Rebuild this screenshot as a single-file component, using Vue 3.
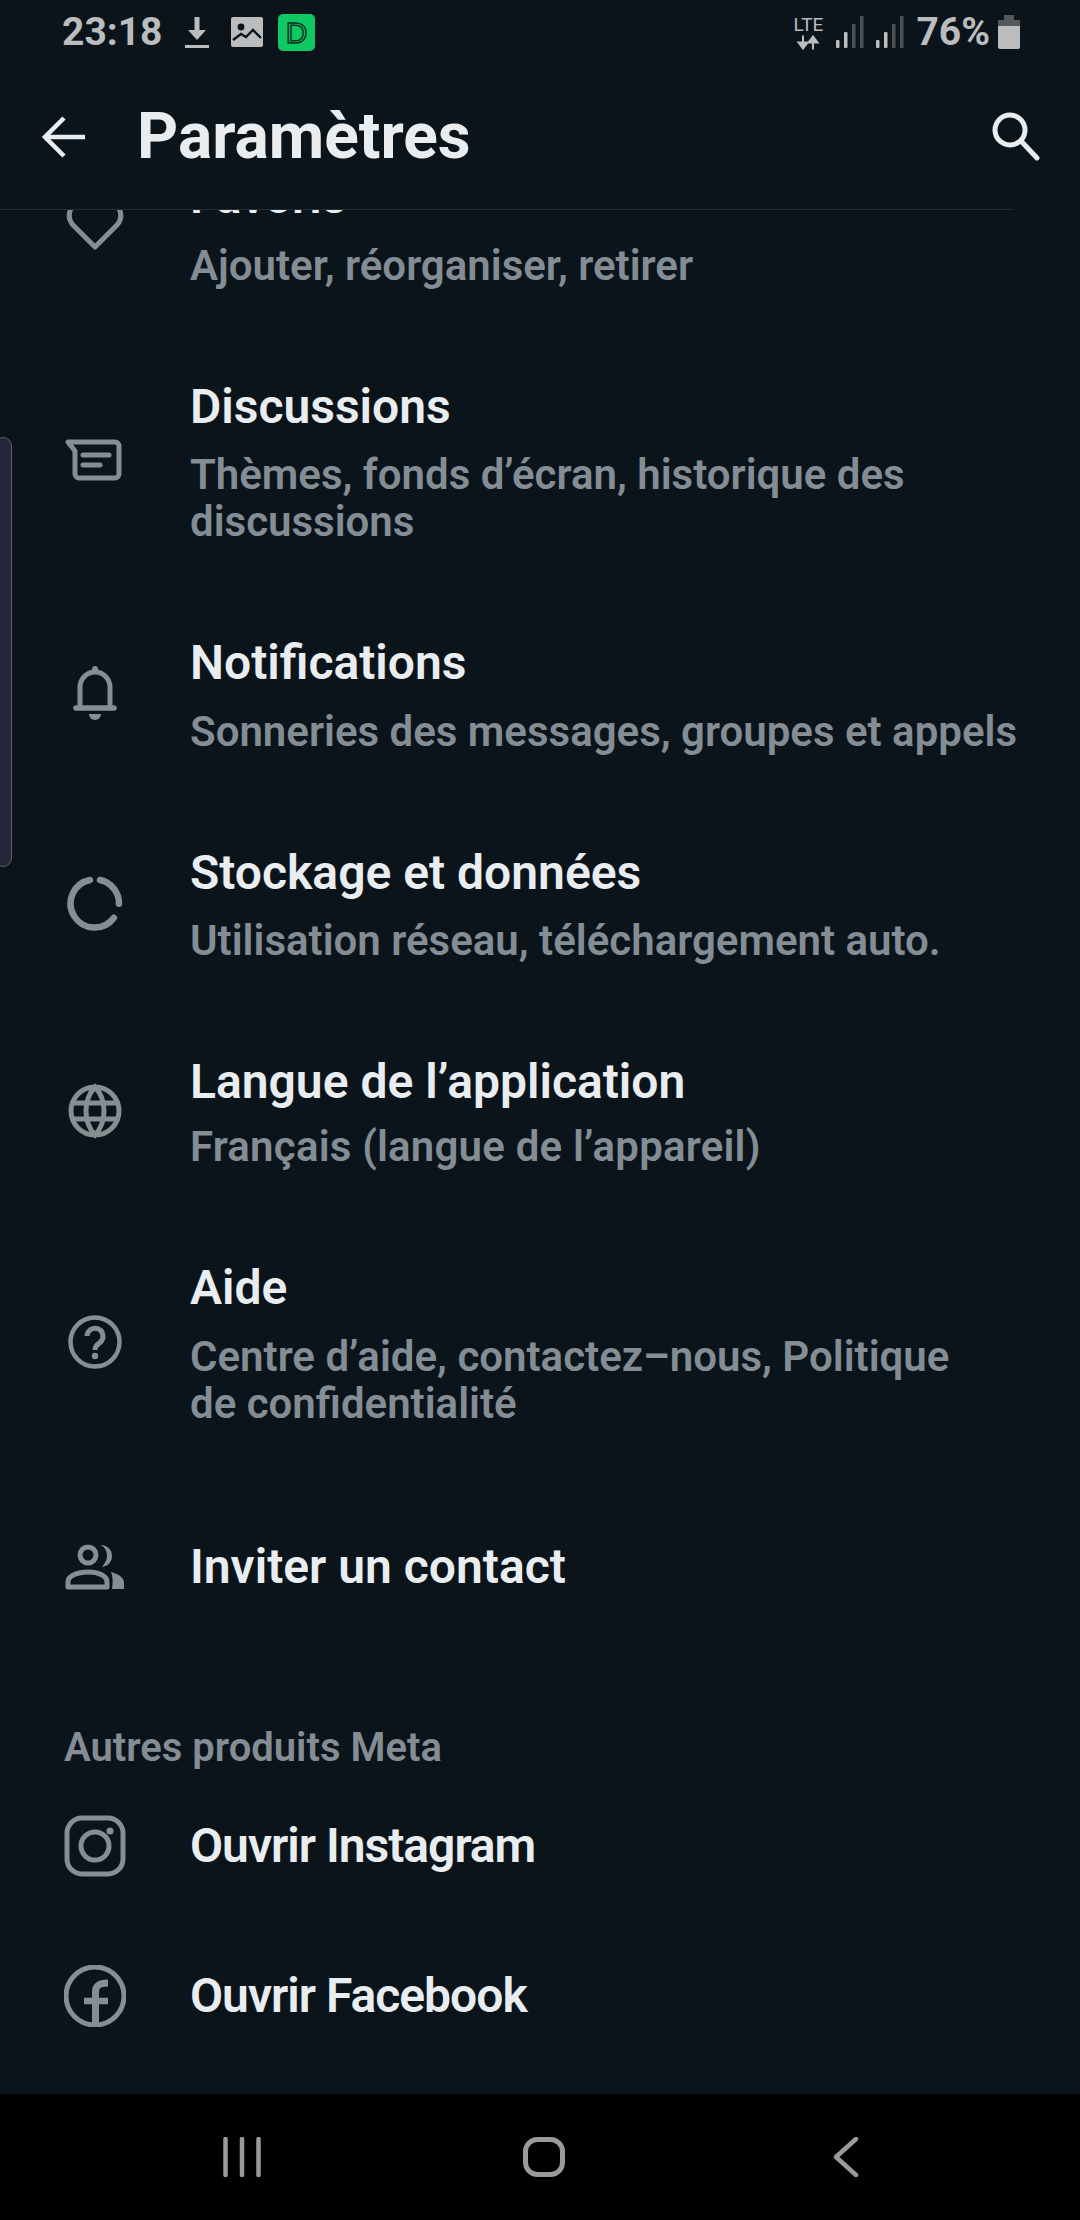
<template>
  <div class="phone">
    <div class="statusbar">
      <span class="time">23:18</span>
      <svg class="ic-download" viewBox="0 0 26 32" width="26" height="32">
        <path d="M13 1V16" stroke="#babcbe" stroke-width="5" fill="none" />
        <path d="M4 14H22L13 24Z" fill="#babcbe" />
        <path d="M1 30.5H25" stroke="#babcbe" stroke-width="3" fill="none" />
      </svg>
      <svg class="ic-image" viewBox="0 0 32 30" width="32" height="30">
        <rect x="0" y="0" width="32" height="30" rx="2" fill="#babcbe" />
        <circle cx="10" cy="10" r="3.4" fill="#0b141b" />
        <path d="M2 23L10 17L15 20L22 13L30 21" stroke="#0b141b" stroke-width="2.4" fill="none" />
      </svg>
      <div class="app-badge">
        <svg viewBox="0 0 37 37" width="37" height="37">
          <text x="18.5" y="29" text-anchor="middle" class="badge-letter">D</text>
        </svg>
      </div>
      <div class="status-right">
        <div class="lte">
          <span>LTE</span>
          <svg viewBox="0 0 24 14" width="24" height="15">
            <path d="M7 0V9M2.5 7L7 13L11.5 7Z" stroke="#babcbe" stroke-width="2" fill="#babcbe" />
            <path d="M17 14V5M12.5 7L17 1L21.5 7Z" stroke="#babcbe" stroke-width="2" fill="#babcbe" />
          </svg>
        </div>
        <svg v-for="n in 2" :key="n" class="signal" viewBox="0 0 28 32" width="28" height="32">
          <rect x="0" y="24" width="3.5" height="8" rx="1" fill="#babcbe" />
          <rect x="8" y="16" width="3.5" height="16" rx="1" fill="#babcbe" />
          <rect x="16" y="8" width="3.5" height="24" rx="1" fill="#4d5154" />
          <rect x="24" y="0" width="3.5" height="32" rx="1" fill="#4d5154" />
        </svg>
        <span class="battery-text">76%</span>
        <svg class="battery" viewBox="0 0 22 34" width="22" height="34">
          <path d="M6 0H16V5H22V11H0V5H6Z" fill="#55595c" />
          <path d="M0 11H22V32a2 2 0 0 1-2 2H2a2 2 0 0 1-2-2Z" fill="#babcbe" />
        </svg>
      </div>
    </div>

    <div class="appbar">
      <svg class="back" viewBox="0 0 44 46" width="44" height="46">
        <path d="M43 23H4M22 4L3 23L22 42" stroke="#e9edef" stroke-width="4.5" fill="none" />
      </svg>
      <h1 class="appbar-title">Paramètres</h1>
      <svg class="search" viewBox="0 0 48 50" width="48" height="50">
        <circle cx="18" cy="18" r="15" stroke="#e9edef" stroke-width="5" fill="none" />
        <path d="M29 29L45 46" stroke="#e9edef" stroke-width="5" stroke-linecap="round" />
      </svg>
    </div>
    <div class="appbar-line"></div>

    <div class="list">
      <div class="list-inner">
        <div v-for="row in rows" :key="row.title" class="row" :class="row.cls">
          <svg class="row-icon" viewBox="0 0 62 62" width="62" height="62">
            <g v-if="row.icon === 'heart'" fill="none" stroke="#868e92" stroke-width="5" stroke-linejoin="round">
              <path d="M31 50L9 28C1 19 7 4 19 4C24 4 28 6 31 10C34 6 38 4 43 4C55 4 61 19 53 28Z" />
            </g>
            <g v-else-if="row.icon === 'chat'" fill="none" stroke="#868e92" stroke-width="5" stroke-linejoin="round" stroke-linecap="round">
              <path d="M4 12H51a4 4 0 0 1 4 4V44a4 4 0 0 1-4 4H15a4 4 0 0 1-4-4V21Z" />
              <path d="M19 25H45M19 35H36" />
            </g>
            <g v-else-if="row.icon === 'bell'" fill="none" stroke="#868e92" stroke-width="5" stroke-linecap="round">
              <path d="M16 44V24a15 15 0 0 1 30 0V44" />
              <path d="M12 45H50" stroke-width="5.5" />
              <path d="M31 6V8" stroke-width="6" />
              <path d="M25 51H37a6 6 0 0 1-12 0Z" fill="#868e92" stroke="none" />
            </g>
            <g v-else-if="row.icon === 'storage'" fill="none" stroke="#868e92" stroke-width="6.5" stroke-linecap="round">
              <path d="M36 8A24 24 0 0 1 55 31.8" />
              <path d="M49.9 45.8A24 24 0 1 1 26 8" />
            </g>
            <g v-else-if="row.icon === 'globe'" fill="none" stroke="#868e92" stroke-width="5">
              <circle cx="31" cy="31" r="24" />
              <path d="M31 7C19 20 19 42 31 55C43 42 43 20 31 7Z" />
              <path d="M9 23H53M9 39H53" />
            </g>
            <g v-else-if="row.icon === 'help'" fill="none" stroke="#868e92" stroke-width="4.5">
              <circle cx="31" cy="31" r="24.5" />
              <path d="M23 25a8 8 0 1 1 13 6.5c-3 2.3-5 3.5-5 7.5" stroke-width="5" />
              <circle cx="31" cy="45" r="3.2" fill="#868e92" stroke="none" />
            </g>
            <g v-else-if="row.icon === 'people'">
              <circle cx="24" cy="19" r="8" fill="none" stroke="#868e92" stroke-width="5" />
              <path d="M4 51V46C4 40 13 36 24 36C35 36 43 40 43 46V51Z" fill="none" stroke="#868e92" stroke-width="5" stroke-linejoin="round" />
              <path d="M36 9C45 9 48 15 48 20C48 26 44 30 38 31C41 27 43 24 43 20C43 15 41 11 36 9Z" fill="#868e92" />
              <path d="M47 36C54 38 60 41 60 47V53H48C49 46 49 41 47 36Z" fill="#868e92" />
            </g>
          </svg>
          <div class="row-text">
            <div class="row-title">{{ row.title }}</div>
            <div v-if="row.sub" class="row-sub">{{ row.sub }}</div>
          </div>
        </div>

        <div class="section-label">Autres produits Meta</div>

        <div v-for="row in links" :key="row.title" class="row row-link">
          <svg class="row-icon" viewBox="0 0 62 62" width="62" height="62">
            <g v-if="row.icon === 'instagram'" fill="none" stroke="#868e92" stroke-width="5">
              <rect x="3" y="3" width="56" height="56" rx="15" />
              <circle cx="31" cy="31" r="14" />
              <circle cx="46" cy="16" r="3.6" fill="#868e92" stroke="none" />
            </g>
            <g v-else fill="none" stroke="#868e92">
              <circle cx="31" cy="31" r="29" stroke-width="5" />
              <path d="M31.5 60V27C31.5 21 35 18 44 18" stroke-width="7" />
              <path d="M20 36H44" stroke-width="6.5" />
            </g>
          </svg>
          <div class="row-text">
            <div class="row-title">{{ row.title }}</div>
          </div>
        </div>
      </div>
    </div>

    <div class="navbar">
      <svg class="nav-item" viewBox="0 0 38 40" width="38" height="40">
        <path d="M2.5 2V38M19 2V38M35.5 2V38" stroke="#9a9a9a" stroke-width="4.5" stroke-linecap="round" />
      </svg>
      <svg class="nav-item" viewBox="0 0 42 40" width="42" height="40">
        <rect x="2.5" y="2.5" width="37" height="35" rx="12" fill="none" stroke="#9a9a9a" stroke-width="5" />
      </svg>
      <svg class="nav-item" viewBox="0 0 28 40" width="28" height="40">
        <path d="M24 2L4 20L24 38" fill="none" stroke="#9a9a9a" stroke-width="4.5" stroke-linecap="round" stroke-linejoin="round" />
      </svg>
    </div>

    <div class="edge-panel"></div>
  </div>
</template>

<script setup>
const rows = [
  { title: 'Favoris', sub: 'Ajouter, réorganiser, retirer', icon: 'heart' },
  { title: 'Discussions', sub: 'Thèmes, fonds d’écran, historique des\ndiscussions', icon: 'chat' },
  { title: 'Notifications', sub: 'Sonneries des messages, groupes et appels', icon: 'bell' },
  { title: 'Stockage et données', sub: 'Utilisation réseau, téléchargement auto.', icon: 'storage' },
  { title: 'Langue de l’application', sub: 'Français (langue de l’appareil)', icon: 'globe', cls: 'row-tight' },
  { title: 'Aide', sub: 'Centre d’aide, contactez–nous, Politique\nde confidentialité', icon: 'help' },
  { title: 'Inviter un contact', icon: 'people', cls: 'row-single' }
]

const links = [
  { title: 'Ouvrir Instagram', icon: 'instagram' },
  { title: 'Ouvrir Facebook', icon: 'facebook' }
]
</script>

<style>
html, body {
  margin: 0;
  background: #0b141b;
}
</style>

<style scoped>
.phone {
  position: relative;
  width: 1080px;
  height: 2220px;
  display: flex;
  flex-direction: column;
  overflow: hidden;
  background: #0b141b;
  font-family: Roboto, "Noto Sans", sans-serif;
}
.statusbar {
  height: 64px;
  display: flex;
  align-items: center;
  padding: 0 60px 0 62px;
  color: #babcbe;
  flex-shrink: 0;
}
.time {
  font-size: 39px;
  font-weight: 700;
  width: 122px;
}
.ic-image {
  margin-left: 21px;
}
.app-badge {
  width: 37px;
  height: 37px;
  margin-left: 15px;
  border-radius: 5px;
  background: #0fc862;
}
.badge-letter {
  font-family: "Liberation Sans", sans-serif;
  font-size: 30px;
  fill: #0fc862;
  stroke: #07341f;
  stroke-width: 1.5;
}
.status-right {
  margin-left: auto;
  display: flex;
  align-items: center;
}
.lte {
  display: flex;
  flex-direction: column;
  align-items: center;
  font-size: 19px;
  line-height: 20px;
  font-weight: 400;
  margin-right: 13px;
}
.signal {
  margin-right: 12px;
}
.battery-text {
  font-size: 39px;
  font-weight: 700;
  margin-right: 5px;
}
.battery {
  margin-left: 3px;
}
.appbar {
  height: 145px;
  display: flex;
  align-items: center;
  padding: 0 40px 0 42px;
  flex-shrink: 0;
}
.appbar-title {
  margin: 0 0 0 51px;
  font-size: 64px;
  line-height: 60px;
  font-weight: 700;
  color: #e9edef;
}
.search {
  margin-left: auto;
}
.appbar-line {
  width: 1013px;
  height: 1px;
  background: #242e35;
  flex-shrink: 0;
}
.list {
  flex: 1;
  overflow: hidden;
}
.list-inner {
  margin-top: -87px;
}
.row {
  display: flex;
  align-items: center;
  gap: 64px;
  padding: 44px 60px 44px 64px;
}
.row-icon {
  flex-shrink: 0;
}
.row-text {
  min-width: 0;
}
.row-title {
  font-size: 48px;
  line-height: 60px;
  font-weight: 600;
  color: #e9edef;
}
.row-sub {
  margin-top: 14.5px;
  font-size: 42px;
  line-height: 47px;
  font-weight: 600;
  color: #848d93;
  white-space: pre-line;
}
.row-tight .row-sub {
  margin-top: 11px;
  letter-spacing: 0.2px;
}
.row-single {
  min-height: 105px;
}
.section-label {
  padding: 60px 64px 0;
  font-size: 40px;
  line-height: 47px;
  font-weight: 600;
  color: #848d93;
}
.row-link {
  height: 150px;
  box-sizing: border-box;
  padding-top: 0;
  padding-bottom: 0;
}
.row-link .row-title {
  letter-spacing: -1px;
}
.navbar {
  height: 126px;
  flex-shrink: 0;
  background: #000;
  display: grid;
  grid-template-columns: 302px 302px 302px;
  justify-content: center;
  padding-left: 8px;
}
.nav-item {
  justify-self: center;
  margin-top: 43px;
}
.edge-panel {
  position: absolute;
  left: -6px;
  top: 437px;
  width: 16px;
  height: 428px;
  border: 1px solid #5c5e68;
  border-radius: 10px;
  background: #25263a;
}
</style>
